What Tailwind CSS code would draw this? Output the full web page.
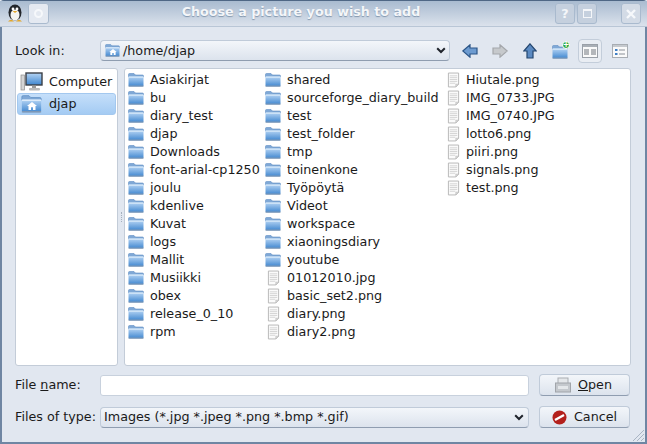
<!doctype html>
<html lang="en">
<head>
<meta charset="UTF-8"/>
<title>Choose a picture you wish to add</title>
<script src="https://cdn.jsdelivr.net/npm/@tailwindcss/browser@4"></script>
</head>
<body class="w-[647px] h-[444px] overflow-hidden font-['DejaVu_Sans',sans-serif] text-[12.72px] leading-[18px] text-[#1a1a1a] bg-[#e1e7f0]">
<svg class="absolute w-0 h-0">
  <defs>
    <linearGradient id="fg" x1="0" y1="0" x2="0" y2="1"><stop offset="0" stop-color="#b5d4f4"/><stop offset="1" stop-color="#3f86cf"/></linearGradient>
    <symbol id="folder" viewBox="0 0 16 14">
      <path d="M0.5 3V1.5Q0.5 0.5 1.5 0.5H6L7.5 2H14.5Q15.5 2 15.5 3V4H0.5Z" fill="#7fa8d6" stroke="#5f8fc4" stroke-width=".6"/>
      <rect x="0.5" y="3.5" width="15" height="10" rx="1" fill="url(#fg)"/>
      <rect x="0.5" y="3.5" width="15" height="1.2" fill="#dcebfa"/>
      <rect x="0.5" y="12.6" width="15" height="1" fill="#8a9bb0"/>
    </symbol>
    <symbol id="file" viewBox="0 0 14 16">
      <path d="M1.5 .5H12.5V12.5L9.5 15.5H1.5Z" fill="#fbfbfb" stroke="#b4b4b4"/>
      <path d="M3 3.5H11M3 5.5H11M3 7.5H11M3 9.5H11M3 11.5H9" stroke="#d2d2d2"/>
      <path d="M12.5 12.5H9.5V15.5Z" fill="#dcdcdc" stroke="#b4b4b4" stroke-width=".6"/>
    </symbol>
    <symbol id="home" viewBox="0 0 10 8">
      <path d="M5 0L10 4H8.5V8H6V5.2H4V8H1.5V4H0Z" fill="#fff"/>
    </symbol>
    <symbol id="chev" viewBox="0 0 10 7">
      <path d="M1.2 1.2L5 5L8.8 1.2" fill="none" stroke="#20242c" stroke-width="2"/>
    </symbol>
  </defs>
</svg>

<div class="w-full h-full flex flex-col border-2 border-[#6f86a3] border-t-[#4f6785] rounded-t-[4px]">
  <!-- title bar -->
  <div class="h-[26px] shrink-0 -mx-[2px] -mt-[1px] flex items-center bg-gradient-to-b from-[#a9bbd0] to-[#dbe2ec] border-b border-[#b9c6d6] pl-[7px] pr-[7px]">
    <svg class="w-[16px] h-[18px] mb-[1px]" viewBox="0 0 16 18">
      <ellipse cx="8" cy="8.5" rx="6.5" ry="8" fill="#23262b"/>
      <ellipse cx="8" cy="11" rx="4.5" ry="5.5" fill="#f4f4f0"/>
      <circle cx="6" cy="5" r="1.4" fill="#fff"/><circle cx="10" cy="5" r="1.4" fill="#fff"/>
      <path d="M5.5 7H10.5L8 9Z" fill="#e3a72a"/>
      <path d="M1 17.5Q4 14 7 17.5ZM9 17.5Q12 14 15 17.5Z" fill="#e3a72a"/>
    </svg>
    <div class="ml-[5px] w-[21px] h-[21px] rounded-[3px] border border-[#a9bace] bg-[#e4e9f1] flex items-center justify-center">
      <span class="w-[9px] h-[9px] rounded-full border-2 border-[#f6f8fb]"></span>
    </div>
    <div class="flex-1 text-center font-bold text-[#f4f6f9] [text-shadow:0_1px_1px_#8296ad] pr-[2px] mb-[3px]">Choose a picture you wish to add</div>
    <div class="w-[20px] h-[21px] rounded-[3px] border border-[#a9bace] bg-[#c5d0de] flex items-center justify-center font-bold text-[#f4f6f9]">?</div>
    <div class="ml-[2px] w-[20px] h-[21px] rounded-[3px] border border-[#a9bace] bg-[#c5d0de] flex items-center justify-center">
      <span class="w-[9px] h-[9px] border border-[#f4f6f9] border-t-2"></span>
    </div>
    <div class="ml-[24px] w-[20px] h-[21px] rounded-[3px] border border-[#a9bace] bg-[#d3dbe6] flex items-center justify-center mr-[-1px]">
      <svg class="w-[10px] h-[10px]" viewBox="0 0 10 10"><path d="M1 1L9 9M9 1L1 9" stroke="#f6f8fb" stroke-width="2.4"/></svg>
    </div>
  </div>

  <div class="flex-1 flex flex-col pl-[13px] pr-[14px] pt-[13px] pb-[12px]">
    <!-- look in row -->
    <div class="flex items-center h-[21px]">
      <span class="w-[85px] shrink-0">Look in:</span>
      <div class="w-[350px] shrink-0 h-[21px] rounded-[4px] border border-[#c0cbd9] border-b-[#8f9db0] bg-gradient-to-b from-[#f3f6fa] to-[#dce3ed] flex items-center pl-[4px] pr-[3px]">
        <span class="relative w-[15px] h-[13px] shrink-0">
          <svg class="w-[15px] h-[13px] block"><use href="#folder"/></svg>
          <svg class="absolute left-[3.5px] top-[5px] w-[8px] h-[6px]"><use href="#home"/></svg>
        </span>
        <span class="ml-[3px] flex-1">/home/djap</span>
        <svg class="w-[10px] h-[7px]"><use href="#chev"/></svg>
      </div>
      <div class="ml-[5px] flex items-center shrink-0">
        <div class="w-[30px] h-[20px] flex justify-center items-center">
          <svg class="w-[16px] h-[14px]" viewBox="0 0 16 14"><path d="M.8 7L8 .8V4H15V10H8V13.2Z" fill="#6d9bd0" stroke="#2c5687" stroke-width="1.2"/></svg>
        </div>
        <div class="w-[30px] h-[20px] flex justify-center items-center">
          <svg class="w-[16px] h-[14px]" viewBox="0 0 16 14"><path d="M15.2 7L8 .8V4H1V10H8V13.2Z" fill="#c6c9cc" stroke="#a4a7ab" stroke-width="1.2"/></svg>
        </div>
        <div class="w-[30px] h-[20px] flex justify-center items-center">
          <svg class="w-[14px] h-[16px]" viewBox="0 0 14 16"><path d="M7 .8L13.2 8H10V15H4V8H.8Z" fill="#5b8ac2" stroke="#24466f" stroke-width="1.2"/></svg>
        </div>
        <div class="w-[30px] h-[20px] flex justify-center items-center relative">
          <svg class="w-[16px] h-[14px] mt-[2px]"><use href="#folder"/></svg>
          <span class="absolute right-[5px] top-[0px] w-[8px] h-[8px] rounded-full bg-[#2fa843] border border-white text-white flex items-center justify-center text-[8px] leading-none font-bold">+</span>
        </div>
        <div class="w-[24px] h-[24px] rounded-[4px] border border-[#c3cdda] bg-[#e9edf3] flex justify-center items-center ml-[3px]">
          <svg class="w-[16px] h-[14px]" viewBox="0 0 16 14"><rect x=".5" y=".5" width="15" height="13" fill="#fafafa" stroke="#9aa0a8"/><rect x="1" y="1" width="14" height="2" fill="#a9afb6"/><path d="M2 6H7M9 6H14M2 8H7M9 8H14M2 10H7M9 10H14" stroke="#6e747c"/></svg>
        </div>
        <div class="w-[16px] h-[20px] flex justify-center items-center ml-[10px]">
          <svg class="w-[16px] h-[14px]" viewBox="0 0 16 14"><rect x=".5" y=".5" width="15" height="13" fill="#fafafa" stroke="#a8adb3"/><rect x="1" y="1" width="14" height="2" fill="#c5c9ce"/><rect x="3" y="5" width="2.5" height="2" fill="#3f7fc4"/><rect x="3" y="9" width="2.5" height="2" fill="#3f7fc4"/><path d="M7 6H13M7 10H13" stroke="#8a9098"/></svg>
        </div>
      </div>
    </div>

    <!-- panes -->
    <div class="flex mt-[7px] h-[298px]">
      <div class="w-[103px] h-full bg-white border border-[#c3ccd8] rounded-[3px] p-[1px]">
        <div class="h-[22px] flex items-center pl-[3px] gap-[5px] mt-[1px]">
          <svg class="w-[24px] h-[20px] shrink-0" viewBox="0 0 24 20">
            <rect x="1" y="3" width="3.5" height="15" fill="#d5d5d5" stroke="#8c8c8c" stroke-width=".7"/>
            <rect x="6" y="1" width="16" height="12" fill="url(#fg)" stroke="#3b3f46" stroke-width="1.4"/>
            <path d="M12 13.5H16V16H12Z" fill="#9a9a9a"/>
            <rect x="9" y="16" width="11" height="2.4" rx="1" fill="#b9b9b9"/>
          </svg>
          <span>Computer</span>
        </div>
        <div class="h-[22px] flex items-center pl-[3px] gap-[7px] rounded-[3px] border border-[#a3c8ef] bg-gradient-to-b from-[#c5dffa] to-[#a4cbf3]">
          <span class="relative w-[21px] h-[18px] shrink-0">
            <svg class="w-[21px] h-[18px] block"><use href="#folder"/></svg>
            <svg class="absolute left-[6px] top-[7px] w-[10px] h-[8px]"><use href="#home"/></svg>
          </span>
          <span>djap</span>
        </div>
      </div>
      <div class="w-[6px] flex items-center justify-center"><span class="w-[1px] h-[10px] border-l border-dotted border-[#a5b0be]"></span></div>
      <div class="flex-1 h-full bg-white border border-[#c3ccd8] rounded-[3px] pt-[2px] pl-[3px] flex">
        <div class="w-[137px]">
          <div class="h-[18px] flex items-center gap-[6px]"><svg class="w-[16px] h-[14px] shrink-0"><use href="#folder"/></svg><span>Asiakirjat</span></div>
          <div class="h-[18px] flex items-center gap-[6px]"><svg class="w-[16px] h-[14px] shrink-0"><use href="#folder"/></svg><span>bu</span></div>
          <div class="h-[18px] flex items-center gap-[6px]"><svg class="w-[16px] h-[14px] shrink-0"><use href="#folder"/></svg><span>diary_test</span></div>
          <div class="h-[18px] flex items-center gap-[6px]"><svg class="w-[16px] h-[14px] shrink-0"><use href="#folder"/></svg><span>djap</span></div>
          <div class="h-[18px] flex items-center gap-[6px]"><svg class="w-[16px] h-[14px] shrink-0"><use href="#folder"/></svg><span>Downloads</span></div>
          <div class="h-[18px] flex items-center gap-[6px]"><svg class="w-[16px] h-[14px] shrink-0"><use href="#folder"/></svg><span>font-arial-cp1250</span></div>
          <div class="h-[18px] flex items-center gap-[6px]"><svg class="w-[16px] h-[14px] shrink-0"><use href="#folder"/></svg><span>joulu</span></div>
          <div class="h-[18px] flex items-center gap-[6px]"><svg class="w-[16px] h-[14px] shrink-0"><use href="#folder"/></svg><span>kdenlive</span></div>
          <div class="h-[18px] flex items-center gap-[6px]"><svg class="w-[16px] h-[14px] shrink-0"><use href="#folder"/></svg><span>Kuvat</span></div>
          <div class="h-[18px] flex items-center gap-[6px]"><svg class="w-[16px] h-[14px] shrink-0"><use href="#folder"/></svg><span>logs</span></div>
          <div class="h-[18px] flex items-center gap-[6px]"><svg class="w-[16px] h-[14px] shrink-0"><use href="#folder"/></svg><span>Mallit</span></div>
          <div class="h-[18px] flex items-center gap-[6px]"><svg class="w-[16px] h-[14px] shrink-0"><use href="#folder"/></svg><span>Musiikki</span></div>
          <div class="h-[18px] flex items-center gap-[6px]"><svg class="w-[16px] h-[14px] shrink-0"><use href="#folder"/></svg><span>obex</span></div>
          <div class="h-[18px] flex items-center gap-[6px]"><svg class="w-[16px] h-[14px] shrink-0"><use href="#folder"/></svg><span>release_0_10</span></div>
          <div class="h-[18px] flex items-center gap-[6px]"><svg class="w-[16px] h-[14px] shrink-0"><use href="#folder"/></svg><span>rpm</span></div>
        </div>
        <div class="w-[180px]">
          <div class="h-[18px] flex items-center gap-[6px]"><svg class="w-[16px] h-[14px] shrink-0"><use href="#folder"/></svg><span>shared</span></div>
          <div class="h-[18px] flex items-center gap-[6px]"><svg class="w-[16px] h-[14px] shrink-0"><use href="#folder"/></svg><span>sourceforge_diary_build</span></div>
          <div class="h-[18px] flex items-center gap-[6px]"><svg class="w-[16px] h-[14px] shrink-0"><use href="#folder"/></svg><span>test</span></div>
          <div class="h-[18px] flex items-center gap-[6px]"><svg class="w-[16px] h-[14px] shrink-0"><use href="#folder"/></svg><span>test_folder</span></div>
          <div class="h-[18px] flex items-center gap-[6px]"><svg class="w-[16px] h-[14px] shrink-0"><use href="#folder"/></svg><span>tmp</span></div>
          <div class="h-[18px] flex items-center gap-[6px]"><svg class="w-[16px] h-[14px] shrink-0"><use href="#folder"/></svg><span>toinenkone</span></div>
          <div class="h-[18px] flex items-center gap-[6px]"><svg class="w-[16px] h-[14px] shrink-0"><use href="#folder"/></svg><span>Työpöytä</span></div>
          <div class="h-[18px] flex items-center gap-[6px]"><svg class="w-[16px] h-[14px] shrink-0"><use href="#folder"/></svg><span>Videot</span></div>
          <div class="h-[18px] flex items-center gap-[6px]"><svg class="w-[16px] h-[14px] shrink-0"><use href="#folder"/></svg><span>workspace</span></div>
          <div class="h-[18px] flex items-center gap-[6px]"><svg class="w-[16px] h-[14px] shrink-0"><use href="#folder"/></svg><span>xiaoningsdiary</span></div>
          <div class="h-[18px] flex items-center gap-[6px]"><svg class="w-[16px] h-[14px] shrink-0"><use href="#folder"/></svg><span>youtube</span></div>
          <div class="h-[18px] flex items-center gap-[7px] pl-[2px]"><svg class="w-[13px] h-[16px] shrink-0"><use href="#file"/></svg><span>01012010.jpg</span></div>
          <div class="h-[18px] flex items-center gap-[7px] pl-[2px]"><svg class="w-[13px] h-[16px] shrink-0"><use href="#file"/></svg><span>basic_set2.png</span></div>
          <div class="h-[18px] flex items-center gap-[7px] pl-[2px]"><svg class="w-[13px] h-[16px] shrink-0"><use href="#file"/></svg><span>diary.png</span></div>
          <div class="h-[18px] flex items-center gap-[7px] pl-[2px]"><svg class="w-[13px] h-[16px] shrink-0"><use href="#file"/></svg><span>diary2.png</span></div>
        </div>
        <div>
          <div class="h-[18px] flex items-center gap-[6px] pl-[2px]"><svg class="w-[13px] h-[16px] shrink-0"><use href="#file"/></svg><span>Hiutale.png</span></div>
          <div class="h-[18px] flex items-center gap-[6px] pl-[2px]"><svg class="w-[13px] h-[16px] shrink-0"><use href="#file"/></svg><span>IMG_0733.JPG</span></div>
          <div class="h-[18px] flex items-center gap-[6px] pl-[2px]"><svg class="w-[13px] h-[16px] shrink-0"><use href="#file"/></svg><span>IMG_0740.JPG</span></div>
          <div class="h-[18px] flex items-center gap-[6px] pl-[2px]"><svg class="w-[13px] h-[16px] shrink-0"><use href="#file"/></svg><span>lotto6.png</span></div>
          <div class="h-[18px] flex items-center gap-[6px] pl-[2px]"><svg class="w-[13px] h-[16px] shrink-0"><use href="#file"/></svg><span>piiri.png</span></div>
          <div class="h-[18px] flex items-center gap-[6px] pl-[2px]"><svg class="w-[13px] h-[16px] shrink-0"><use href="#file"/></svg><span>signals.png</span></div>
          <div class="h-[18px] flex items-center gap-[6px] pl-[2px]"><svg class="w-[13px] h-[16px] shrink-0"><use href="#file"/></svg><span>test.png</span></div>
        </div>
      </div>
    </div>

    <!-- file name -->
    <div class="flex items-center mt-[8px] h-[22px]">
      <span class="w-[85px] shrink-0">File <span class="underline">n</span>ame:</span>
      <div class="w-[429px] shrink-0 h-[21px] bg-white border border-[#c8d1dd] rounded-[3px]"></div>
      <div class="ml-[10px] w-[91px] shrink-0 h-[22px] rounded-[4px] border border-[#c0cbd9] border-b-[#8f9db0] bg-gradient-to-b from-[#f3f6fa] to-[#dce3ed] flex items-center justify-center gap-[7px] pr-[2px]">
        <svg class="w-[16px] h-[16px]" viewBox="0 0 16 16"><rect x="3" y="1" width="10" height="6" fill="#e4e7ea" stroke="#a9adb2"/><rect x=".5" y="6" width="15" height="9" fill="#c4c8cd" stroke="#a0a4aa"/><rect x="3" y="9" width="10" height="3" fill="#e4e7ea"/></svg>
        <span><span class="underline">O</span>pen</span>
      </div>
    </div>

    <!-- file type -->
    <div class="flex items-center mt-[10px] h-[22px]">
      <span class="w-[85px] shrink-0">Files of type:</span>
      <div class="w-[429px] shrink-0 h-[21px] rounded-[4px] border border-[#c0cbd9] border-b-[#8f9db0] bg-gradient-to-b from-[#f3f6fa] to-[#dce3ed] flex items-center pl-[3px] pr-[4px]">
        <span class="flex-1">Images (*.jpg *.jpeg *.png *.bmp *.gif)</span>
        <svg class="w-[10px] h-[7px]"><use href="#chev"/></svg>
      </div>
      <div class="ml-[10px] w-[91px] shrink-0 h-[22px] rounded-[4px] border border-[#c0cbd9] border-b-[#8f9db0] bg-gradient-to-b from-[#f3f6fa] to-[#dce3ed] flex items-center justify-center gap-[7px]">
        <svg class="w-[15px] h-[15px]" viewBox="0 0 15 15"><circle cx="7.5" cy="7.5" r="7" fill="#b3201c"/><path d="M3 10L12 5" stroke="#fff" stroke-width="2.4"/></svg>
        <span>Cancel</span>
      </div>
    </div>
  </div>
</div>
<svg class="absolute left-[632px] top-[429px] w-[13px] h-[13px]" viewBox="0 0 13 13"><path d="M1 12L12 1M5 12L12 5M9 12L12 9" stroke="#a9b5c4" stroke-width="1"/></svg>
</body>
</html>
